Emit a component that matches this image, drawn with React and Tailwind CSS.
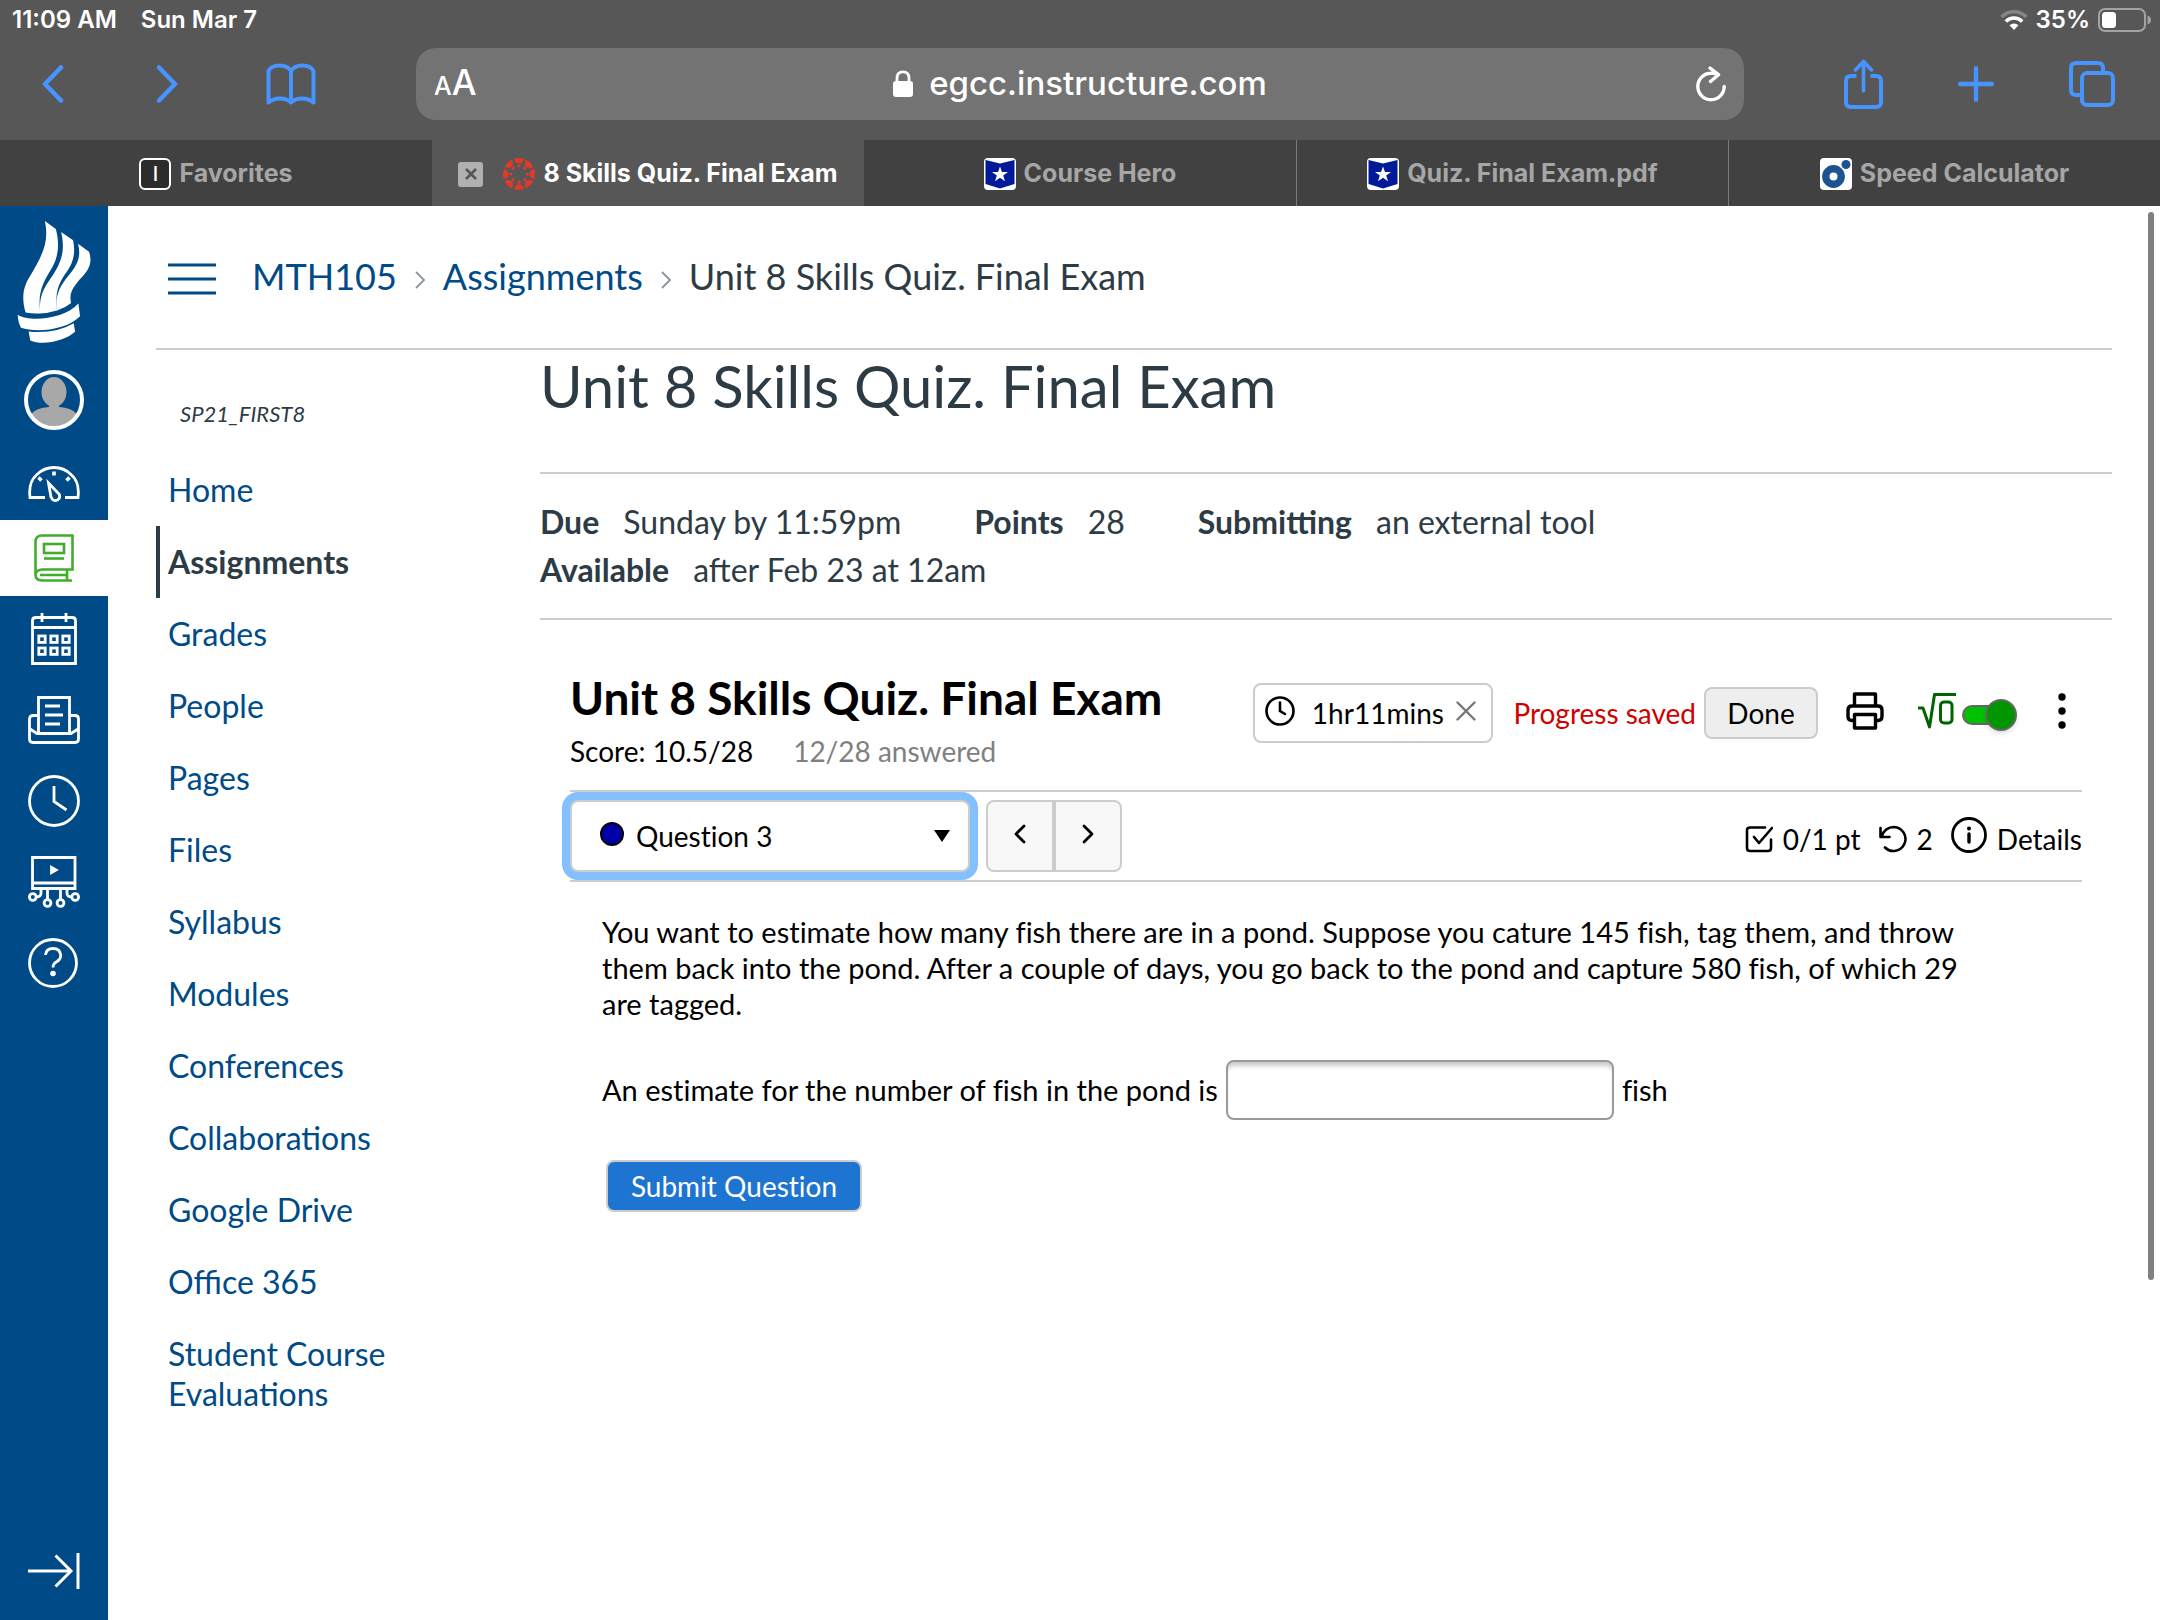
import { useState } from "react";

const tabs = [
  { name: "Favorites", icon: "letter" },
  { name: "8 Skills Quiz. Final Exam", icon: "canvas", active: true },
  { name: "Course Hero", icon: "shield" },
  { name: "Quiz. Final Exam.pdf", icon: "shield" },
  { name: "Speed Calculator", icon: "omni" },
];

const courseLinks = [
  "Home",
  "Assignments",
  "Grades",
  "People",
  "Pages",
  "Files",
  "Syllabus",
  "Modules",
  "Conferences",
  "Collaborations",
  "Google Drive",
  "Office 365",
  "Student Course Evaluations",
];

const angles = [0, 45, 90, 135, 180, 225, 270, 315];

const TabIcon = ({ type }) => {
  if (type === "letter") {
    return (
      <span className="flex h-8 w-8 items-center justify-center rounded-md border-2 border-white bg-[#2c2c2c] text-xl font-medium text-white">
        I
      </span>
    );
  }
  if (type === "canvas") {
    return (
      <svg className="h-8 w-8" viewBox="0 0 32 32" fill="#e4392a">
        {angles.map((a) => (
          <g key={a} transform={`rotate(${a} 16 16)`}>
            <path d="M11 .8Q16-.8 21 .8Q20 5.600 16 5.600Q12 5.600 11 .8Z" />
            <circle cx="16" cy="7.800" r="1.600" />
          </g>
        ))}
      </svg>
    );
  }
  if (type === "shield") {
    return (
      <svg className="h-8 w-8" viewBox="0 0 32 32">
        <rect width="32" height="32" rx="4" fill="#fff" />
        <path d="M1.5 2L16 5.500L30.500 2V26L16 30.500L1.500 26Z" fill="#001a99" />
        <path d="M16 8.500L18 14H24L19.200 17.500L21 23.200L16 19.800L11 23.200L12.800 17.500L8 14H14Z" fill="#fff" />
      </svg>
    );
  }
  return (
    <svg className="h-8 w-8" viewBox="0 0 32 32">
      <rect width="32" height="32" rx="4" fill="#fff" />
      <circle cx="13.500" cy="18.500" r="7.700" fill="none" stroke="#1c5390" strokeWidth="7.400" />
      <circle cx="26" cy="6.500" r="4.500" fill="#1c5390" />
    </svg>
  );
};

const StatusBar = () => (
  <div className="flex h-10 items-center justify-between pr-2 pl-3 text-2xl font-semibold text-white">
    <div className="flex gap-6">
      <span>11:09 AM</span>
      <span>Sun Mar 7</span>
    </div>
    <div className="flex items-center gap-2">
      <svg className="h-5 w-7" viewBox="0 0 28 20" fill="none" strokeWidth="3.600">
        <path d="M1.500 7A17.500 17.500 0 0 1 26.500 7" stroke="#858585" />
        <path d="M5.800 11.500A11.500 11.500 0 0 1 22.200 11.500" stroke="#fff" />
        <path d="M14 20L9.500 15.300A6.500 6.500 0 0 1 18.500 15.300Z" fill="#fff" />
      </svg>
      <span>35%</span>
      <svg className="h-6 w-[54px]" viewBox="0 0 54 24">
        <rect x="1" y="1" width="46" height="22" rx="6" fill="none" stroke="#a3a3a3" strokeWidth="2" />
        <rect x="4" y="4" width="14" height="16" rx="3.500" fill="#fff" />
        <path d="M49.500 7.500Q53 9 53 12T49.500 16.500Z" fill="#a3a3a3" />
      </svg>
    </div>
  </div>
);

const Toolbar = () => (
  <div className="flex h-[100px] items-center pb-3 text-[#4794ff]">
    <div className="flex w-[416px] shrink-0 items-center gap-[88px] pl-[42px]">
      <button aria-label="Back">
        <svg className="h-10 w-[22px]" viewBox="0 0 22 40" fill="none" stroke="currentColor" strokeWidth="4.500" strokeLinecap="round" strokeLinejoin="round">
          <path d="M19 3.500L3 20L19 36.500" />
        </svg>
      </button>
      <button aria-label="Forward" className="ml-1">
        <svg className="h-10 w-[22px]" viewBox="0 0 22 40" fill="none" stroke="currentColor" strokeWidth="4.500" strokeLinecap="round" strokeLinejoin="round">
          <path d="M3 3.500L19 20L3 36.500" />
        </svg>
      </button>
      <button aria-label="Bookmarks">
        <svg className="h-[42px] w-[50px]" viewBox="0 0 50 42" fill="none" stroke="currentColor" strokeWidth="4" strokeLinejoin="round">
          <path d="M25 39.500C20 34 8 34 2.500 39.500V8C6 .500 21 .500 25 8C29 .500 44 .500 47.500 8V39.500C42 34 30 34 25 39.500ZV8" />
        </svg>
      </button>
    </div>
    <div className="flex h-[72px] flex-1 items-center justify-between rounded-[20px] bg-[#737373] px-[18px] text-white">
      <button aria-label="Text size" className="flex w-[42px] items-baseline font-medium">
        <span className="text-[25px]">A</span>
        <span className="text-[35px] leading-10">A</span>
      </button>
      <div className="flex items-center gap-4 text-[33px] font-medium">
        <svg className="h-7 w-5" viewBox="0 0 20 28">
          <rect y="11" width="20" height="16" rx="3" fill="#fff" />
          <path d="M4 13V8Q4 1.800 10 1.800T16 8V13" fill="none" stroke="#fff" strokeWidth="2.800" />
        </svg>
        <span>egcc.instructure.com</span>
      </div>
      <button aria-label="Reload" className="flex w-[42px] justify-end">
        <svg className="h-9 w-[30px]" viewBox="0 0 30 36" fill="none" stroke="currentColor" strokeWidth="3.400" strokeLinecap="round" strokeLinejoin="round">
          <path d="M28.200 20.500A13.200 13.200 0 1 1 15 7.300Q19 7 22 8.500M14 2L22.500 8.700L14.500 15.500" />
        </svg>
      </button>
    </div>
    <div className="flex w-[416px] shrink-0 items-center justify-between pr-[45px] pl-[100px]">
      <button aria-label="Share">
        <svg className="h-[50px] w-[39px]" viewBox="0 0 39 50" fill="none" stroke="currentColor" strokeWidth="4" strokeLinecap="round" strokeLinejoin="round">
          <path d="M12.500 17H7Q2 17 2 22V43Q2 48 7 48H32Q37 48 37 43V22Q37 17 32 17H26.500" strokeLinecap="butt" />
          <path d="M19.500 32V3M11.500 11L19.500 2.500L27.500 11" strokeWidth="3.600" />
        </svg>
      </button>
      <button aria-label="New tab">
        <svg className="h-9 w-9" viewBox="0 0 36 36" fill="none" stroke="currentColor" strokeWidth="4.400" strokeLinecap="round">
          <path d="M18 2.200V33.800M2.200 18H33.800" />
        </svg>
      </button>
      <button aria-label="Show tabs">
        <svg className="h-[46px] w-[46px]" viewBox="0 0 46 46" fill="none" stroke="currentColor" strokeWidth="4">
          <rect x="13" y="12" width="31" height="32" rx="5" />
          <path d="M34 11V7Q34 2 29 2H7Q2 2 2 7V29Q2 34 7 34H12" />
        </svg>
      </button>
    </div>
  </div>
);

const TabBar = () => (
  <div className="grid h-[66px] grid-cols-5 bg-[#414141] text-[25px] font-bold">
    {tabs.map((tab, i) => (
      <div
        key={tab.name}
        className={
          tab.active
            ? "flex items-center justify-center gap-2 bg-[#575757] pt-[2px] text-white"
            : i > 2
              ? "flex items-center justify-center gap-2 border-l border-[#7a7a7a] pt-[2px] text-[#a6a6a6]"
              : "flex items-center justify-center gap-2 pt-[2px] text-[#a6a6a6]"
        }
      >
        {tab.active && (
          <button aria-label="Close tab" className="mr-3 flex h-[25px] w-[25px] items-center justify-center rounded-[3px] bg-[#b0b0b0]">
            <svg className="h-3 w-3" viewBox="0 0 12 12" stroke="#575757" strokeWidth="2.600">
              <path d="M1 1L11 11M11 1L1 11" />
            </svg>
          </button>
        )}
        <TabIcon type={tab.icon} />
        <span className="whitespace-nowrap">{tab.name}</span>
      </div>
    ))}
  </div>
);

const GlobalNav = () => (
  <nav className="flex w-[108px] shrink-0 flex-col bg-[#004b87] text-white">
    <a href="#home" aria-label="College home" className="flex h-[154px] justify-center pt-[14px]">
      <svg className="h-[124px] w-[75px]" viewBox="50 58 226 372" fill="#fff">
        <path d="M134 60L167 84C182 140 170 180 150 210C125 250 115 280 119 322V339Q95 340 76 336C62 290 70 255 90 225C125 165 148 125 134 60Z" />
        <path d="M183 93L219 118C230 170 210 200 195 220C178 245 168 270 169 300L170 330Q145 338 118 339L119 322C120 290 125 270 150 235C185 185 196 150 183 93Z" />
        <path d="M234 129L267 153C280 190 262 212 240 235C215 265 207 280 213 307Q195 322 169 331V300C172 275 180 255 205 225C235 190 243 165 234 129Z" />
        <path d="M52 343C90 367 195 355 235 309L240 347C200 388 110 398 62 382Q54 370 52 343Z" />
        <path d="M85 393Q165 401 221 368L225 394C190 425 125 435 90 420Z" />
      </svg>
    </a>
    <a href="#account" aria-label="Account" className="flex h-20 items-center justify-center">
      <svg className="h-[60px] w-[60px]" viewBox="0 0 60 60">
        <g fill="#a8a8a8">
          <ellipse cx="30" cy="22" rx="12.500" ry="15" />
          <path d="M25 34V37Q12 38 7 44Q16 57 30 57T53 44Q48 38 35 37V34Z" />
        </g>
        <circle cx="30" cy="30" r="28" fill="none" stroke="#fff" strokeWidth="4" />
      </svg>
    </a>
    <a href="#dashboard" aria-label="Dashboard" className="flex h-20 items-center justify-center pt-2">
      <svg className="h-9 w-[52px]" viewBox="0 0 52 36" fill="none" stroke="currentColor" strokeWidth="2.800">
        <path d="M17 31.500H2Q0 16 9 8.500Q16 1.500 26 1.500T43 8.500Q52 16 50 31.500H37" />
        <path d="M26 5.500V9.500M10.500 11.500L13.500 14.500M41.500 11.500L38.500 14.500" strokeWidth="3.600" />
        <path d="M20.500 17L31 28Q33 32 29.500 34Q25 36 23 31Z" />
      </svg>
    </a>
    <a href="#courses" aria-label="Courses" className="flex h-[76px] items-center justify-center bg-white text-[#3faf2a]">
      <svg className="h-12 w-10" viewBox="0 0 40 48" fill="none" stroke="currentColor" strokeWidth="2.600">
        <path d="M1.500 42V8Q1.500 1.500 8 1.500H38.500V35.500H8Q1.500 36 1.500 41T8 46.500H38M33 36V46M6 41H33" />
        <rect x="10" y="10" width="20" height="9" />
        <path d="M10 24.500H30" />
      </svg>
    </a>
    <a href="#calendar" aria-label="Calendar" className="flex h-[81px] items-center justify-center pt-1">
      <svg className="h-[52px] w-[46px]" viewBox="0 0 46 52" fill="none" stroke="currentColor" strokeWidth="2.800">
        <path d="M1.500 50.500V7.500Q1.500 4.500 5 4.500H41Q44.500 4.500 44.500 7.500V50.500ZM1.500 14.500H44.500M11 0V9M35 0V9" />
        {[11, 23, 35].map((x) => (
          <g key={x}>
            <rect x={x - 3.2} y="23" width="6.400" height="6.400" />
            <rect x={x - 3.2} y="35" width="6.400" height="6.400" />
          </g>
        ))}
      </svg>
    </a>
    <a href="#inbox" aria-label="Inbox" className="flex h-[81px] items-center justify-center pt-1">
      <svg className="h-12 w-[52px]" viewBox="0 0 52 48" fill="none" stroke="currentColor" strokeWidth="2.800">
        <path d="M10.500 37V1.500H41.500V37M10.500 19.500H5Q1.500 19.500 1.500 23V43Q1.500 46.500 5 46.500H47Q50.500 46.500 50.500 43V23Q50.500 19.500 47 19.500H41.500M2 33L9 37.500H43L50 33M17 10H32M17 19H35M17 28H32" />
      </svg>
    </a>
    <a href="#history" aria-label="History" className="flex h-[81px] items-center justify-center pt-1">
      <svg className="h-[52px] w-[52px]" viewBox="0 0 52 52" fill="none" stroke="currentColor" strokeWidth="2.800">
        <circle cx="26" cy="26" r="24.500" />
        <path d="M26 11V26.500L38.500 35" />
      </svg>
    </a>
    <a href="#studio" aria-label="Studio" className="flex h-[81px] items-center justify-center pt-1">
      <svg className="h-[52px] w-[52px]" viewBox="0 0 52 52" fill="none" stroke="currentColor" strokeWidth="2.800">
        <path d="M4.500 1.500H47V32.500H4.500ZM4.500 27H47M13 32.500V37Q13 41 8 41M19.500 32.500V43M32.500 32.500V43M39 32.500V37Q39 41 44 41" />
        <circle cx="4.800" cy="41" r="3.400" />
        <circle cx="19.500" cy="47" r="3.400" />
        <circle cx="32.500" cy="47" r="3.400" />
        <circle cx="47.200" cy="41" r="3.400" />
        <path d="M23.500 11.500V16.500L28 14Z" fill="currentColor" />
      </svg>
    </a>
    <a href="#help" aria-label="Help" className="flex h-[81px] items-center pt-1 pl-7">
      <svg className="h-[50px] w-[50px]" viewBox="0 0 50 50" fill="none" stroke="currentColor" strokeWidth="2.800">
        <circle cx="25" cy="25" r="23.500" />
        <path d="M17.500 17Q18 10.500 25 10.500T32.700 17Q33 21 29 23.500Q25 25.500 25 29.500" />
        <circle cx="25" cy="35.500" r="2.800" fill="currentColor" stroke="none" />
      </svg>
    </a>
    <button aria-label="Expand navigation" className="mt-auto flex h-[98px] items-center justify-center">
      <svg className="h-9 w-[52px]" viewBox="0 0 52 36" fill="none" stroke="currentColor" strokeWidth="3">
        <path d="M0 18H43M27.500 2.500L43 18L27.500 33.500M50 0V36" />
      </svg>
    </button>
  </nav>
);

const Chevron = () => (
  <svg className="mt-2 h-[18px] w-3" viewBox="0 0 12 18" fill="none" stroke="#8b949b" strokeWidth="1.800">
    <path d="M2 1L10 9L2 17" />
  </svg>
);

const CourseNav = () => (
  <aside className="w-[384px] shrink-0 pt-11">
    <p className="mb-5 pl-6 text-[22px] leading-10 italic">SP21_FIRST8</p>
    <ul className="text-[32px] leading-10">
      {courseLinks.map((link) => (
        <li key={link} className="w-[260px]">
          <a
            href="#course"
            className={
              link === "Assignments"
                ? "block border-l-4 border-[#2d3b45] py-4 pl-2 font-bold"
                : "block border-l-4 border-transparent py-4 pl-2 text-[#004b87]"
            }
          >
            {link}
          </a>
        </li>
      ))}
    </ul>
  </aside>
);

const QuizHeader = () => {
  const [mathOn, setMathOn] = useState(true);

  return (
    <div className="flex items-start justify-between border-b-2 border-[#ccc] pt-[50px] pb-[14px]">
      <div>
        <h2 className="text-[46px] leading-[56px] font-bold">Unit 8 Skills Quiz. Final Exam</h2>
        <p className="flex gap-10 leading-[50px]">
          <span>Score: 10.5/28</span>
          <span className="text-[#808080]">12/28 answered</span>
        </p>
      </div>
      <div className="mt-[13px] flex items-center">
        <div className="flex h-[60px] w-[240px] items-center justify-between rounded-lg border-2 border-[#ccc] pr-[15px] pl-[10px]">
          <svg className="mb-1 h-[30px] w-[30px]" viewBox="0 0 30 30" fill="none" stroke="#000" strokeWidth="2.600" strokeLinecap="round">
            <circle cx="15" cy="15" r="13.500" />
            <path d="M15 6.500V15L20 18" />
          </svg>
          <span className="pl-1">1hr11mins</span>
          <button aria-label="Hide timer">
            <svg className="mb-1 h-5 w-5" viewBox="0 0 20 20" fill="none" stroke="#777" strokeWidth="2.400" strokeLinecap="round">
              <path d="M1.500 1.500L18.500 18.500M18.500 1.500L1.500 18.500" />
            </svg>
          </button>
        </div>
        <span className="ml-5 text-[#d00000]">Progress saved</span>
        <button className="ml-2 h-[52px] w-[114px] rounded-lg border-2 border-[#ccc] bg-[#eee]">Done</button>
        <button aria-label="Print" className="ml-7 pb-1">
          <svg className="h-[38px] w-[38px]" viewBox="0 0 38 38" fill="none" stroke="#000" strokeWidth="3.400" strokeLinejoin="round">
            <path d="M8.500 14V2H29.500V14M8.500 28.500H6Q2 28.500 2 24.500V18Q2 14 6 14H32Q36 14 36 18V24.500Q36 28.500 32 28.500H29.500M8.500 22.500H29.500V36H8.500Z" />
          </svg>
        </button>
        <label className="ml-[34px] flex items-center gap-1">
          <svg className="mb-1 h-[38px] w-[40px]" viewBox="0 0 40 38" fill="none" stroke="#006400" strokeWidth="3" role="img" aria-label="Math entry">
            <path d="M0 16H5L11.500 35L16.500 2.500H38" strokeLinejoin="round" />
            <rect x="22.500" y="10" width="11.500" height="21" rx="3.500" />
          </svg>
          <input
            type="checkbox"
            checked={mathOn}
            onChange={() => setMathOn(!mathOn)}
            className="relative mt-1 h-5 w-[53px] appearance-none rounded-full border-2 border-[#666] bg-[#00c200] before:absolute before:-top-2 before:-right-1 before:h-8 before:w-8 before:rounded-full before:border-2 before:border-[#666] before:bg-[#009600] before:shadow-md"
          />
        </label>
        <button aria-label="More options" className="ml-[43px] pr-4 pb-1">
          <svg className="h-9 w-2" viewBox="0 0 8 36" fill="#000">
            <circle cx="4" cy="4" r="3.700" />
            <circle cx="4" cy="18" r="3.700" />
            <circle cx="4" cy="32" r="3.700" />
          </svg>
        </button>
      </div>
    </div>
  );
};

const QuestionBar = () => (
  <div className="flex h-[90px] items-center justify-between border-b-2 border-[#ccc]">
    <div className="flex items-center gap-4">
      <div className="relative">
        <select
          aria-label="Question"
          className="block h-[72px] w-[400px] appearance-none rounded-lg border-2 border-[#ccc] bg-white pl-16 ring-8 ring-[#84c0ff] outline-none"
        >
          <option>Question 3</option>
        </select>
        <span className="pointer-events-none absolute top-[22px] left-[30px] h-6 w-6 rounded-full border-2 border-black bg-[#0000a8]" />
        <svg className="pointer-events-none absolute top-[30px] right-5 h-3 w-4" viewBox="0 0 16 12">
          <path d="M0 0H16L8 12Z" />
        </svg>
      </div>
      <div className="flex">
        <button aria-label="Previous question" className="flex h-[72px] w-[68px] items-center justify-center rounded-l-lg border-2 border-[#ccc] bg-[#f8f8f8] pb-1">
          <svg className="h-5 w-3" viewBox="0 0 12 20" fill="none" stroke="#000" strokeWidth="2.800" strokeLinecap="round" strokeLinejoin="round">
            <path d="M10 2L2 10L10 18" />
          </svg>
        </button>
        <button aria-label="Next question" className="flex h-[72px] w-[68px] items-center justify-center rounded-r-lg border-2 border-[#ccc] bg-[#f8f8f8] pb-1">
          <svg className="h-5 w-3" viewBox="0 0 12 20" fill="none" stroke="#000" strokeWidth="2.800" strokeLinecap="round" strokeLinejoin="round">
            <path d="M2 2L10 10L2 18" />
          </svg>
        </button>
      </div>
    </div>
    <div className="flex items-center gap-[10px] pt-[6px]">
      <svg className="h-7 w-7" viewBox="0 0 28 28" fill="none" stroke="#000" strokeWidth="2.600" strokeLinecap="round" strokeLinejoin="round">
        <path d="M20 2.500H5Q2 2.500 2 5.500V23Q2 26 5 26H23Q26 26 26 23V14.500M9 12L14 18L27 3" />
      </svg>
      <span>0/1 pt</span>
      <svg className="ml-2 h-7 w-7" viewBox="0 0 28 28" fill="none" stroke="#000" strokeWidth="2.600" strokeLinecap="round" strokeLinejoin="round">
        <path d="M1.500 3V12H10.500M2.500 11.500Q6 2 15 2A12 12 0 1 1 6 22.500" />
      </svg>
      <span>2</span>
      <button className="ml-2 flex items-center gap-[10px]">
        <svg className="mb-2 h-9 w-9" viewBox="0 0 36 36" fill="none" stroke="#000" strokeWidth="2.800" strokeLinecap="round">
          <circle cx="18" cy="18" r="16.500" />
          <path d="M18 17V25" strokeWidth="3.400" />
          <circle cx="18" cy="11.500" r="2" fill="#000" stroke="none" />
        </svg>
        Details
      </button>
    </div>
  </div>
);

const Quiz = () => (
  <section className="px-[30px] font-[Lato,sans-serif] text-[28px] text-black [font-variant-ligatures:none]">
    <QuizHeader />
    <QuestionBar />
    <form className="px-8 pt-8" onSubmit={(e) => e.preventDefault()}>
      <p className="max-w-[1370px] text-[29px] leading-9">
        You want to estimate how many fish there are in a pond. Suppose you cature 145 fish, tag them,
        and throw them back into the pond. After a couple of days, you go back to the pond and capture
        580 fish, of which 29 are tagged.
      </p>
      <div className="mt-[38px] flex items-center gap-2 text-[29px]">
        <label htmlFor="answer">An estimate for the number of fish in the pond is</label>
        <input
          id="answer"
          type="text"
          className="h-[60px] w-[388px] rounded-lg border-2 border-[#999] px-3 shadow-[inset_0_6px_4px_-2px_#ccc] outline-none"
        />
        <span>fish</span>
      </div>
      <button type="submit" className="mt-10 ml-1 h-[52px] w-[256px] rounded-lg border-2 border-[#ccc] bg-[#1e74d1] text-white">
        Submit Question
      </button>
    </form>
  </section>
);

const App = () => {
  return (
    <div className="flex min-h-screen flex-col bg-white">
      <header className="bg-[#575757] font-[Inter,sans-serif]">
        <StatusBar />
        <Toolbar />
        <TabBar />
      </header>
      <div className="relative flex flex-1 font-[Lato,sans-serif] text-[#2d3b45]">
        <GlobalNav />
        <div className="min-w-0 flex-1 px-12">
          <div className="flex h-36 items-center border-b-2 border-[#c7cdd1] pl-3 text-[36px]">
            <button aria-label="Course navigation" className="mt-1 mr-9">
              <svg className="h-8 w-12" viewBox="0 0 48 32" stroke="#004b87" strokeWidth="3">
                <path d="M0 2H48M0 16H48M0 30H48" />
              </svg>
            </button>
            <nav className="flex items-center gap-[17px] pb-[2px]">
              <a href="#course" className="text-[#004b87]">MTH105</a>
              <Chevron />
              <a href="#assignments" className="text-[#004b87]">Assignments</a>
              <Chevron />
              <span>Unit 8 Skills Quiz. Final Exam</span>
            </nav>
          </div>
          <div className="flex">
            <CourseNav />
            <main className="min-w-0 flex-1">
              <h1 className="border-b-2 border-[#c7cdd1] pb-[50px] text-[58px] leading-[72px]">
                Unit 8 Skills Quiz. Final Exam
              </h1>
              <dl className="flex flex-wrap gap-x-[73px] border-b-2 border-[#c7cdd1] py-6 pr-[400px] text-[32px] leading-[48px]">
                <div className="flex gap-6">
                  <dt className="font-bold">Due</dt>
                  <dd>Sunday by 11:59pm</dd>
                </div>
                <div className="flex gap-6">
                  <dt className="font-bold">Points</dt>
                  <dd>28</dd>
                </div>
                <div className="flex gap-6">
                  <dt className="font-bold">Submitting</dt>
                  <dd>an external tool</dd>
                </div>
                <div className="flex gap-6">
                  <dt className="font-bold">Available</dt>
                  <dd>after Feb 23 at 12am</dd>
                </div>
              </dl>
              <Quiz />
            </main>
          </div>
        </div>
        <div className="absolute top-[6px] right-[6px] h-[1068px] w-[6px] rounded-full bg-[#808080]" />
      </div>
    </div>
  );
};

export default App;
